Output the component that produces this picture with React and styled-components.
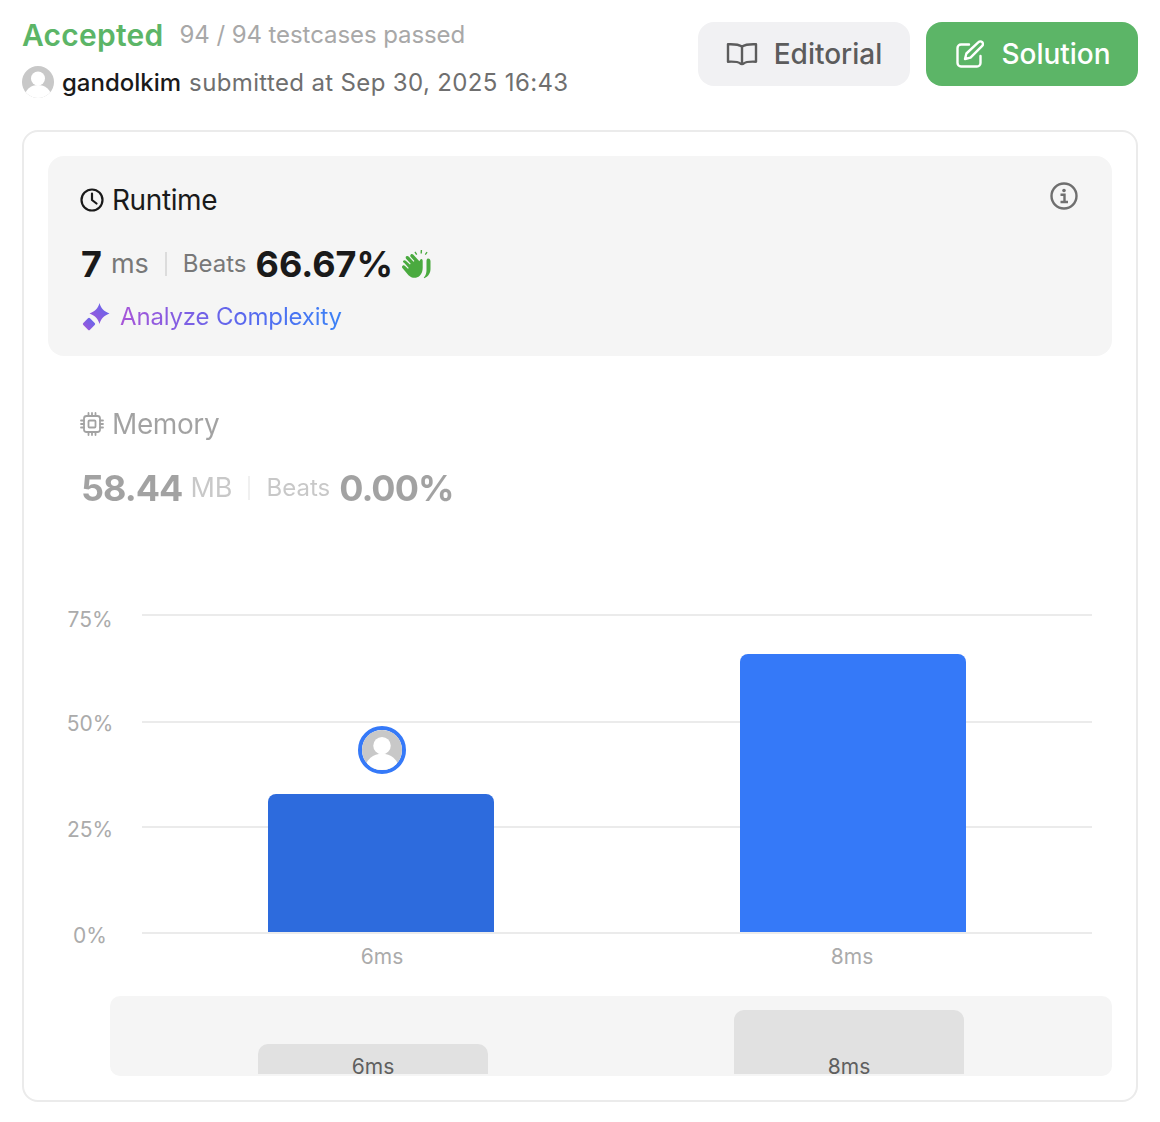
import React from 'react';
import styled, { createGlobalStyle } from 'styled-components';

const GlobalStyle = createGlobalStyle`
  html, body {
    margin: 0;
    padding: 0;
    background: #fff;
    font-family: Inter, "Liberation Sans", sans-serif;
  }
  * { box-sizing: border-box; }
`;

const Page = styled.div`
  width: 1160px;
  height: 1122px;
  padding: 20px 22px;
  overflow: hidden;
`;

const Header = styled.header`
  display: flex;
  justify-content: space-between;
  height: 78px;
  margin-bottom: 32px;
`;

const Summary = styled.div`
  display: flex;
  flex-direction: column;
  gap: 16px;
`;

const StatusRow = styled.div`
  display: flex;
  align-items: center;
  gap: 16px;
  height: 30px;
`;

const StatusTitle = styled.span`
  color: #5cb567;
  font-size: 30px;
  font-weight: 600;
  line-height: 30px;
  letter-spacing: 0.25px;
`;

const Cases = styled.span`
  color: #a8a8a8;
  font-size: 24px;
  line-height: 30px;
  letter-spacing: -0.08px;
`;

const SubmitRow = styled.div`
  display: flex;
  align-items: center;
  gap: 8px;
  height: 32px;
  font-size: 24px;
`;

const UserName = styled.span`
  color: #1a1a1a;
  font-weight: 500;
`;

const SubmitText = styled.span`
  color: #6f6f6f;
  letter-spacing: 0.36px;
`;

const Actions = styled.div`
  display: flex;
  gap: 16px;
  padding-top: 2px;
`;

const ActionButton = styled.div`
  display: flex;
  align-items: center;
  justify-content: center;
  gap: ${({ $primary }) => ($primary ? '17px' : '16px')};
  width: 212px;
  height: 64px;
  padding-left: ${({ $primary }) => ($primary ? '3px' : '0')};
  border-radius: 16px;
  font-size: 28px;
  font-weight: 500;
  background: ${({ $primary }) => ($primary ? '#5cb567' : '#f1f1f3')};
  color: ${({ $primary }) => ($primary ? '#fff' : '#5c5c5c')};
`;

const Card = styled.section`
  display: flex;
  flex-direction: column;
  height: 972px;
  padding: 24px;
  border: 2px solid #ebebeb;
  border-radius: 16px;
`;

const StatPanel = styled.div`
  position: relative;
  padding: 28px 32px 23px;
  border-radius: 16px;
  background: ${({ $active }) => ($active ? '#f5f5f5' : 'transparent')};
  opacity: ${({ $active }) => ($active ? 1 : 0.4)};
  margin-bottom: ${({ $active }) => ($active ? '24px' : '0')};
`;

const StatTitle = styled.div`
  display: flex;
  align-items: center;
  gap: 8px;
  height: 32px;
  color: #1a1a1a;
  font-size: 28px;
  line-height: 32px;
  letter-spacing: -0.4px;
`;

const InfoButton = styled.div`
  position: absolute;
  top: 26px;
  right: 34px;
  width: 28px;
  height: 28px;
  color: #6f6f6f;
`;

const ValueRow = styled.div`
  display: flex;
  align-items: center;
  height: 48px;
  margin-top: 24px;
  padding-left: 1px;
`;

const BigValue = styled.span`
  color: #1a1a1a;
  font-size: 36px;
  font-weight: 700;
  line-height: 48px;
`;

const MemoryValue = styled(BigValue)`
  margin-right: -1px;
  letter-spacing: -1px;
`;

const Unit = styled.span`
  margin-left: 9px;
  color: #787878;
  font-size: 27px;
  line-height: 48px;
`;

const Divider = styled.span`
  width: 2px;
  height: 24px;
  margin: 0 16px;
  background: #dcdcdc;
`;

const BeatsLabel = styled.span`
  margin-right: 9px;
  color: #787878;
  font-size: 24px;
  line-height: 48px;
`;

const ClapWrap = styled.span`
  display: flex;
  margin: 2px 0 0 8px;
`;

const AnalyzeRow = styled.div`
  display: flex;
  align-items: center;
  gap: 10px;
  height: 32px;
  margin-top: 13px;
  padding-left: 2px;
`;

const AnalyzeText = styled.span`
  font-size: 24px;
  line-height: 32px;
  letter-spacing: -0.17px;
  background: linear-gradient(90deg, #a855d8 0%, #5a68ee 55%, #3b82f6 100%);
  -webkit-background-clip: text;
  background-clip: text;
  color: transparent;
`;

const ChartSvg = styled.svg`
  display: block;
  flex: none;
  margin-top: 65px;
`;

const AxisText = styled.text`
  fill: #ababab;
  font-family: Inter, "Liberation Sans", sans-serif;
  font-size: 21px;
  text-anchor: middle;
`;

const Navigator = styled.div`
  display: flex;
  align-items: flex-end;
  gap: 246px;
  align-self: flex-end;
  width: 1002px;
  height: 80px;
  margin-top: 20px;
  padding: 0 0 2px 148px;
  border-radius: 10px;
  background: #f5f5f5;
`;

const NavBar = styled.div`
  display: flex;
  align-items: flex-end;
  justify-content: center;
  width: 230px;
  height: ${({ $height }) => $height}px;
  border-radius: 10px 10px 0 0;
  background: #e1e1e1;
  color: #5f5f5f;
  font-size: 21px;
  line-height: 15px;
`;

const BookIcon = () => (
  <svg width="32" height="24" viewBox="0 0 32 24" fill="none" stroke="currentColor" strokeWidth="2.4" strokeLinejoin="round" strokeLinecap="round">
    <path d="M16 4.500C13 2.600 9 2 2 2.300v17.400c7-.3 10.500.2 12.200 1.700.8.8 2.800.8 3.600 0 1.700-1.500 5.200-2 12.200-1.700V2.300C23 2 19 2.600 16 4.500z" />
    <path d="M16 4.500v16" />
  </svg>
);

const PenIcon = () => (
  <svg width="28" height="28" viewBox="0 0 28 28" fill="none" stroke="currentColor" strokeWidth="2.400" strokeLinejoin="round" strokeLinecap="round">
    <path d="M13 4.500H5a3.500 3.500 0 0 0-3.500 3.500v15a3.500 3.500 0 0 0 3.500 3.500h16a3.500 3.500 0 0 0 3.500-3.500v-7" />
    <path d="M22.500 2.200a2.600 2.600 0 0 1 3.700 3.700L14.500 17.600l-5.500 1.400 1.400-5.500z" />
  </svg>
);

const ClockIcon = () => (
  <svg width="24" height="24" viewBox="0 0 24 24" fill="none" stroke="currentColor" strokeWidth="2.200" strokeLinecap="round" strokeLinejoin="round">
    <circle cx="12" cy="12" r="10.500" />
    <path d="M12 5.500V12l4.500 3.500" />
  </svg>
);

const CpuIcon = () => (
  <svg width="24" height="24" viewBox="0 0 24 24" fill="none" stroke="currentColor" strokeWidth="1.800" strokeLinecap="round" strokeLinejoin="round">
    <rect x="4" y="4" width="16" height="16" rx="2.500" />
    <rect x="8.500" y="8.500" width="7" height="7" rx="1" />
    <path d="M8.500 1v3M12 1v3M15.500 1v3M8.500 20v3M12 20v3M15.500 20v3M1 8.500h3M1 12h3M1 15.500h3M20 8.500h3M20 12h3M20 15.500h3" />
  </svg>
);

const InfoIcon = () => (
  <svg width="28" height="28" viewBox="0 0 28 28" fill="none" stroke="currentColor" strokeWidth="2.400">
    <circle cx="14" cy="14" r="12.500" />
    <circle cx="14" cy="8.500" r="1.800" fill="currentColor" stroke="none" />
    <path d="M10.500 12.700H14.500V19.500M10.500 20H18" strokeWidth="2.400" />
  </svg>
);

const ClapIcon = () => (
  <svg width="30" height="30" viewBox="0 0 30 30" fill="#4aaa3f">
    <path d="M2.300 10.800c.9-.9 2-.6 2.800.2l3.800 3.600.8-.8L5.300 9c-.9-1-.8-2 0-2.700.8-.7 1.800-.5 2.600.4l4.700 5 .8-.7-3.600-4c-.8-.9-.7-1.900 0-2.500.8-.7 1.800-.5 2.600.3l6 6.400c.6-1.200 1-2.300 1.900-2.300 1.200 0 1.400 1.100 1.400 2.300v6.500c0 3.300-.9 6-3 8-3.200 3-8 2.700-11.200-.5L1.600 18.300c-.8-.9-.8-1.900 0-2.600.7-.7 1.700-.6 2.500.2l2.900 2.800.7-.7-4.400-4.900c-.9-.9-1.800-1.600-1-2.300z" />
    <path d="M27 8.500c1.700 0 2.500 1.200 2.500 2.800v7.500c0 4-2 7.700-5.800 9.300-.8.300-1.200-.3-.6-.8 1.700-1.900 2.400-4.400 2.400-7.300v-8.500c0-1.600.3-3 1.500-3z" />
    <path d="M14.500 1.500l1.800 2.800-1.200.7-1.700-2.800zM19.700 0h1.400l-.2 3.600h-1.400zM25.500 1.700l1.100.8-1.800 2.500-1-.8z" />
  </svg>
);

const SparkleIcon = () => (
  <svg width="28" height="28" viewBox="0 0 28 28">
    <defs>
      <linearGradient id="sparkle" x1="0" y1="1" x2="1" y2="0">
        <stop offset="0" stopColor="#a855d8" />
        <stop offset="1" stopColor="#5a68ee" />
      </linearGradient>
    </defs>
    <path fill="url(#sparkle)" d="M17.500 0c1.600 5.400 3.800 8 10 10.500-6.200 2.500-8.400 5.100-10 10.500-1.600-5.400-3.800-8-10-10.500 6.200-2.500 8.400-5.100 10-10.500z" />
    <path fill="url(#sparkle)" d="M6 15.300a1.400 1.400 0 0 1 2 0l4.700 4.700a1.400 1.400 0 0 1 0 2L8 26.700a1.400 1.400 0 0 1-2 0L1.300 22a1.400 1.400 0 0 1 0-2z" />
  </svg>
);

// grey placeholder picture, used in the header and on the chart
const UserAvatar = ({ size = 32 }) => (
  <svg width={size} height={size} viewBox="0 0 32 32">
    <defs>
      <clipPath id="avatarClip">
        <circle cx="16" cy="16" r="16" />
      </clipPath>
    </defs>
    <g clipPath="url(#avatarClip)">
      <rect width="32" height="32" fill="#c8c8c8" />
      <circle cx="16" cy="12.500" r="7" fill="#fff" />
      <ellipse cx="16" cy="30" rx="13" ry="11" fill="#fff" />
    </g>
  </svg>
);

const gridLines = [
  { y: 15, label: '75%', labelY: 27 },
  { y: 122, label: '50%', labelY: 131 },
  { y: 227, label: '25%', labelY: 237 },
  { y: 333, label: '0%', labelY: 343 },
];

const topRounded = (x, y, w, h, r) =>
  `M${x} ${y + h}V${y + r}a${r} ${r} 0 0 1 ${r}-${r}H${x + w - r}a${r} ${r} 0 0 1 ${r} ${r}V${y + h}z`;

const DistributionChart = () => (
  <ChartSvg width="1064" height="376" viewBox="0 0 1064 376">
    {gridLines.map((line) => (
      <g key={line.label}>
        <rect x="94" y={line.y - 1} width="950" height="2" fill="#ebebeb" />
        <AxisText x="42" y={line.labelY}>{line.label}</AxisText>
      </g>
    ))}
    <path d={topRounded(220, 194, 226, 138, 8)} fill="#2d6bdd" />
    <path d={topRounded(692, 54, 226, 278, 8)} fill="#3579f8" />
    <circle cx="334" cy="150" r="22" fill="#fff" stroke="#3579f8" strokeWidth="4" />
    <svg x="314" y="130" width="40" height="40" viewBox="0 0 32 32">
      <circle cx="16" cy="16" r="16" fill="#c8c8c8" />
      <clipPath id="markerClip">
        <circle cx="16" cy="16" r="16" />
      </clipPath>
      <g clipPath="url(#markerClip)">
        <circle cx="16" cy="12.500" r="7" fill="#fff" />
        <ellipse cx="16" cy="30" rx="13" ry="11" fill="#fff" />
      </g>
    </svg>
    <AxisText x="334" y="364">6ms</AxisText>
    <AxisText x="804" y="364">8ms</AxisText>
  </ChartSvg>
);

const App = () => (
  <Page>
    <GlobalStyle />
    <Header>
      <Summary>
        <StatusRow>
          <StatusTitle>Accepted</StatusTitle>
          <Cases>94 / 94 testcases passed</Cases>
        </StatusRow>
        <SubmitRow>
          <UserAvatar />
          <UserName>gandolkim</UserName>
          <SubmitText>submitted at Sep 30, 2025 16:43</SubmitText>
        </SubmitRow>
      </Summary>
      <Actions>
        <ActionButton>
          <BookIcon />
          Editorial
        </ActionButton>
        <ActionButton $primary>
          <PenIcon />
          Solution
        </ActionButton>
      </Actions>
    </Header>

    <Card>
      <StatPanel $active>
        <StatTitle>
          <ClockIcon />
          Runtime
        </StatTitle>
        <InfoButton>
          <InfoIcon />
        </InfoButton>
        <ValueRow>
          <BigValue>7</BigValue>
          <Unit>ms</Unit>
          <Divider />
          <BeatsLabel>Beats</BeatsLabel>
          <BigValue>66.67%</BigValue>
          <ClapWrap>
            <ClapIcon />
          </ClapWrap>
        </ValueRow>
        <AnalyzeRow>
          <SparkleIcon />
          <AnalyzeText>Analyze Complexity</AnalyzeText>
        </AnalyzeRow>
      </StatPanel>

      <StatPanel>
        <StatTitle>
          <CpuIcon />
          Memory
        </StatTitle>
        <ValueRow>
          <MemoryValue>58.44</MemoryValue>
          <Unit>MB</Unit>
          <Divider />
          <BeatsLabel>Beats</BeatsLabel>
          <MemoryValue>0.00%</MemoryValue>
        </ValueRow>
      </StatPanel>

      <DistributionChart />

      <Navigator>
        <NavBar $height={30}>6ms</NavBar>
        <NavBar $height={64}>8ms</NavBar>
      </Navigator>
    </Card>
  </Page>
);

export default App;
